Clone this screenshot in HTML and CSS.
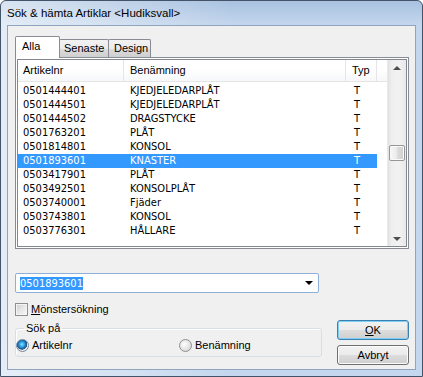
FILE: index.html
```html
<!DOCTYPE html>
<html lang="sv">
<head>
<meta charset="utf-8">
<title>Sök &amp; hämta Artiklar</title>
<link rel="stylesheet" href="styles.css">
</head>
<body>
<div class="window">
  <div class="titlebar">Sök &amp; hämta Artiklar &lt;Hudiksvall&gt;</div>
  <div class="client">
    <div class="tabs">
      <div class="tab active tab-alla">Alla</div>
      <div class="tab tab-senaste">Senaste</div>
      <div class="tab tab-design">Design</div>
    </div>
    <div class="panel">
      <div class="listview">
        <div class="list">
          <div class="header">
            <div class="hc c1">Artikelnr</div>
            <div class="hc c2">Benämning</div>
            <div class="hc c3">Typ</div>
            <div class="hc c4"></div>
          </div>
          <div class="rows">
            <div class="row"><span class="c1">0501444401</span><span class="c2">KJEDJELEDARPLÅT</span><span class="c3">T</span></div>
            <div class="row"><span class="c1">0501444501</span><span class="c2">KJEDJELEDARPLÅT</span><span class="c3">T</span></div>
            <div class="row"><span class="c1">0501444502</span><span class="c2">DRAGSTYCKE</span><span class="c3">T</span></div>
            <div class="row"><span class="c1">0501763201</span><span class="c2">PLÅT</span><span class="c3">T</span></div>
            <div class="row"><span class="c1">0501814801</span><span class="c2">KONSOL</span><span class="c3">T</span></div>
            <div class="row selected"><span class="c1">0501893601</span><span class="c2">KNASTER</span><span class="c3">T</span></div>
            <div class="row"><span class="c1">0503417901</span><span class="c2">PLÅT</span><span class="c3">T</span></div>
            <div class="row"><span class="c1">0503492501</span><span class="c2">KONSOLPLÅT</span><span class="c3">T</span></div>
            <div class="row"><span class="c1">0503740001</span><span class="c2">Fjäder</span><span class="c3">T</span></div>
            <div class="row"><span class="c1">0503743801</span><span class="c2">KONSOL</span><span class="c3">T</span></div>
            <div class="row"><span class="c1">0503776301</span><span class="c2">HÅLLARE</span><span class="c3">T</span></div>
          </div>
        </div>
        <div class="scrollbar">
          <div class="sb-btn"><span class="tri-up"></span></div>
          <div class="track"><div class="thumb"></div></div>
          <div class="sb-btn"><span class="tri-down"></span></div>
        </div>
      </div>
    </div>

    <div class="combo">
      <span class="combo-text"><span class="sel">0501893601</span></span>
      <span class="combo-arrow"></span>
    </div>

    <div class="bottom">
      <div class="left">
        <div class="check"><span class="box"></span><span class="lbl"><u>M</u>önstersökning</span></div>
        <fieldset class="group">
          <legend>Sök på</legend>
          <div class="radios">
            <div class="radio-item first"><span class="radio on"></span><span class="lbl">Artikelnr</span></div>
            <div class="radio-item"><span class="radio"></span><span class="lbl">Benämning</span></div>
          </div>
        </fieldset>
      </div>
      <div class="buttons">
        <div class="btn default"><u>O</u>K</div>
        <div class="btn">Avbryt</div>
      </div>
    </div>
  </div>
</div>
</body>
</html>
```
FILE: styles.css
```css
html, body {
  margin: 0;
  padding: 0;
  background: #ffffff;
}

.window {
  width: 423px;
  height: 377px;
  box-sizing: border-box;
  border: 1px solid #42536a;
  border-radius: 6px 6px 0 0;
  padding: 0 6px 6px 6px;
  display: flex;
  flex-direction: column;
  background:
    linear-gradient(to right, rgba(255,255,255,0.55), rgba(255,255,255,0) 55%),
    linear-gradient(#a9c2e0, #c3d6ed 24px, #c4d7ee);
  font-family: "Liberation Sans", Arial, sans-serif;
  font-size: 11px;
  color: #000;
}

.titlebar {
  height: 24px;
  line-height: 25px;
  font-size: 11.5px;
  white-space: nowrap;
}

.client {
  flex: 1;
  background: #f0f0f0;
  border: 1px solid #8ea4bf;
  padding: 10px 6px 0 7px;
  display: flex;
  flex-direction: column;
}

/* Tabs */
.tabs {
  display: flex;
  align-items: flex-end;
  height: 21px;
}

.tab {
  box-sizing: border-box;
  height: 18px;
  line-height: 16px;
  border: 1px solid #898c95;
  border-bottom: none;
  border-radius: 2px 2px 0 0;
  padding-left: 4px;
  margin-left: -1px;
  background: linear-gradient(#f2f2f2, #ebebeb 50%, #dddddd 50%, #cfcfcf);
  white-space: nowrap;
}

.tab.active {
  position: relative;
  z-index: 1;
  height: 22px;
  margin-bottom: -1px;
  line-height: 19px;
  padding-left: 6px;
  background: #ffffff;
}

.tab-alla { width: 45px; margin-left: 0; }
.tab-senaste { width: 50px; }
.tab-design { width: 43px; padding-left: 5px; }

/* Tab page */
.panel {
  height: 192px;
  box-sizing: border-box;
  border: 1px solid #898c95;
  padding: 1px;
  background: #ffffff;
}

.listview {
  height: 100%;
  box-sizing: border-box;
  border: 1px solid #828790;
  display: flex;
  background: #ffffff;
}

.list {
  flex: 1;
  font-size: 11px;
}

.header {
  display: flex;
  height: 21px;
  border-bottom: 1px solid #e5e5e5;
  background: linear-gradient(#ffffff 0%, #ffffff 45%, #f6f7f9 100%);
  line-height: 21px;
}

.hc {
  box-sizing: border-box;
  border-right: 1px solid #e3e5e8;
  white-space: nowrap;
}

.c1 { width: 106px; padding-left: 5px; box-sizing: border-box; }
.c2 { width: 222px; padding-left: 6px; box-sizing: border-box; }
.c3 { width: 31px; padding-left: 6px; box-sizing: border-box; }
.hc.c4 { flex: 1; border-right: none; }

.rows {
  margin-top: 2px;
  font-family: "DejaVu Sans Condensed", "DejaVu Sans", sans-serif;
  font-stretch: condensed;
  font-size: 11px;
}

.row {
  display: flex;
  width: 359px;
  height: 14px;
  line-height: 14px;
  white-space: nowrap;
}

.row .c3 { padding-left: 8px; }

.row.selected {
  background: #3399ff;
  color: #ffffff;
}

/* Scrollbar */
.scrollbar {
  width: 18px;
  display: flex;
  flex-direction: column;
  background: linear-gradient(to right, #e2e2e2, #eeeeee 20%, #f2f2f2 60%, #e8e8e8);
  border-left: 1px solid #e9e9e9;
}

.sb-btn {
  height: 14px;
  display: flex;
  align-items: center;
  justify-content: center;
}

.sb-btn:first-child { height: 15px; }

.tri-up, .tri-down {
  width: 0;
  height: 0;
  border-left: 4px solid transparent;
  border-right: 4px solid transparent;
}

.tri-up { border-bottom: 4px solid #4d4d4d; }
.tri-down { border-top: 4px solid #4d4d4d; }

.track {
  flex: 1;
}

.thumb {
  margin-top: 70px;
  margin-left: 1px;
  width: 16px;
  height: 16px;
  box-sizing: border-box;
  border: 1px solid #969696;
  border-radius: 2px;
  background: linear-gradient(to right, #f7f7f7, #ececec 45%, #dcdcdc 55%, #cfcfcf);
  box-shadow: inset 0 0 0 1px #f9f9f9;
}

/* Combo */
.combo {
  margin-top: 24px;
  width: 304px;
  height: 20px;
  box-sizing: border-box;
  border: 1px solid #8eb0d8;
  border-radius: 2px;
  background: #ffffff;
  display: flex;
  align-items: center;
  justify-content: space-between;
  padding: 0 5px 0 4px;
}

.combo-text {
  font-family: "DejaVu Sans Condensed", "DejaVu Sans", sans-serif;
  font-stretch: condensed;
  font-size: 11px;
}

.sel {
  background: #3399ff;
  color: #ffffff;
  line-height: 13px;
  display: inline-block;
}

.combo-arrow {
  width: 0;
  height: 0;
  border-left: 4px solid transparent;
  border-right: 4px solid transparent;
  border-top: 4px solid #000;
}

/* Bottom area */
.bottom {
  margin-top: 10px;
  display: flex;
  justify-content: space-between;
}

.left {
  width: 307px;
}

.check {
  display: flex;
  align-items: center;
  height: 13px;
}

.box {
  width: 13px;
  height: 13px;
  box-sizing: border-box;
  border: 1px solid #8e8f8f;
  background: linear-gradient(135deg, #cfcfcf, #e6e6e6 50%, #f8f8f8);
  box-shadow: inset 0 0 0 1px #f4f4f4;
  margin-right: 3px;
}

.lbl {
  line-height: 13px;
  white-space: nowrap;
}

.group {
  margin: 6px 0 0 0;
  padding: 0 0 4px 0;
  border: 1px solid #d5dfe5;
  border-radius: 3px;
  box-shadow: inset 1px 1px 0 #ffffff;
  min-width: 0;
}

.group legend {
  margin-left: 8px;
  padding: 0 2px;
  line-height: 13px;
}

.radios {
  display: flex;
  margin-top: 4px;
  height: 13px;
}

.radio-item {
  display: flex;
  align-items: center;
}

.radio-item.first {
  width: 163px;
}

.radio {
  width: 13px;
  height: 13px;
  box-sizing: border-box;
  border-radius: 50%;
  border: 1px solid #8e8f8f;
  background: radial-gradient(circle at 40% 40%, #ffffff, #dcdcdc 70%, #cfcfcf);
  margin-right: 3px;
}

.radio.on {
  border-color: #6f8aa6;
  background: radial-gradient(circle at 45% 40%, #8fe0ff 0, #3eb0ec 2px, #1a6fb3 4px, #2d4f73 5px, #f0f0f0 5.5px, #dedede 100%);
}

.buttons {
  padding-top: 17px;
  display: flex;
  flex-direction: column;
  gap: 5px;
}

.btn {
  width: 72px;
  height: 20px;
  box-sizing: border-box;
  border: 1px solid #707070;
  border-radius: 3px;
  background: linear-gradient(#f2f2f2, #ebebeb 50%, #dddddd 50%, #cfcfcf);
  box-shadow: inset 0 0 0 1px #fbfbfb;
  text-align: center;
  line-height: 18px;
}

.btn.default {
  border-color: #3c7fb1;
  box-shadow: inset 0 0 0 1px #7fd0f5;
}
```
